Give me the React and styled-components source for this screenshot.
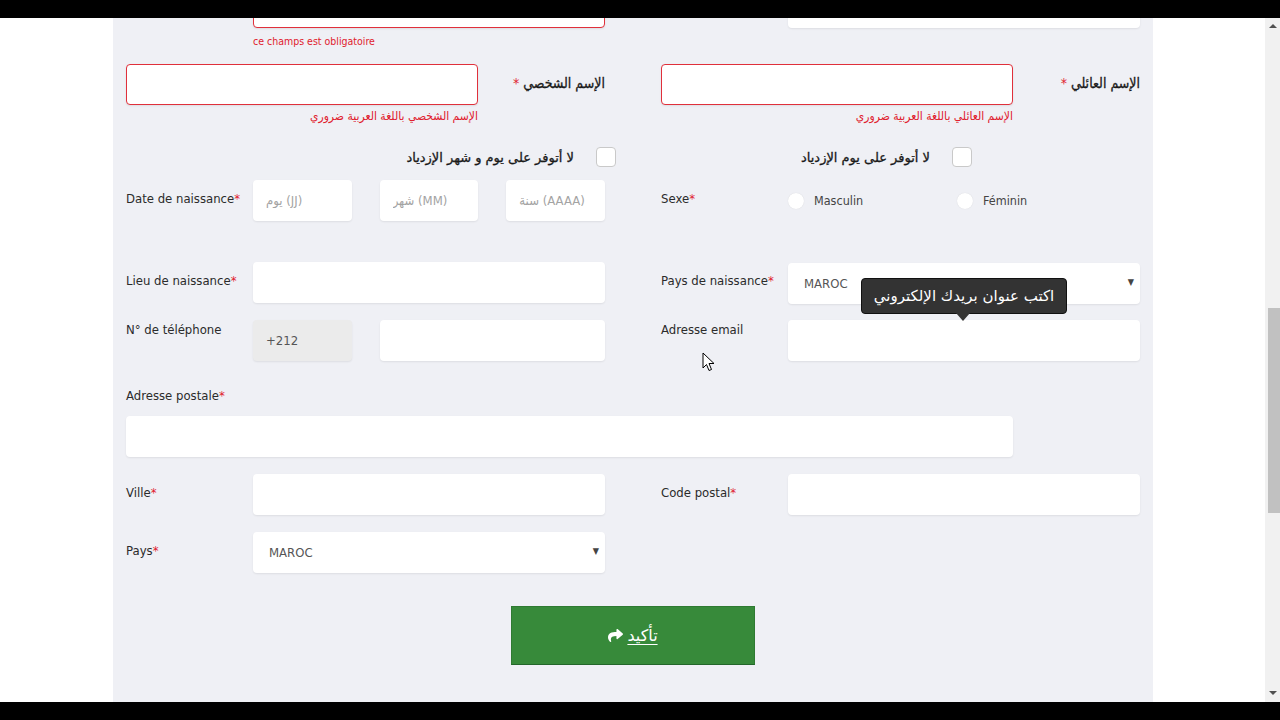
import React from 'react';
import styled, { createGlobalStyle } from 'styled-components';
import { FaShare } from 'react-icons/fa';

const GlobalStyle = createGlobalStyle`
  html, body {
    margin: 0;
    padding: 0;
    overflow: hidden;
    background: #000;
  }
  * { box-sizing: border-box; }
`;

const FONT = `"DejaVu Sans Condensed", "DejaVu Sans", "Liberation Sans", sans-serif`;

const Frame = styled.div`
  width: 1280px;
  height: 720px;
  display: flex;
  flex-direction: column;
  background: #000;
  font-family: ${FONT};
`;

const BlackBar = styled.div`
  height: 18px;
  flex: 0 0 18px;
  background: #000;
`;

const Main = styled.div`
  flex: 1;
  display: flex;
  background: #fff;
  overflow: hidden;
`;

const Gutter = styled.div`
  flex: 0 0 ${(p) => p.$w}px;
  background: #fff;
`;

const Panel = styled.div`
  flex: 0 0 1040px;
  background: #eff0f5;
  padding: 0 13px;
  overflow: hidden;
  position: relative;
`;

const Content = styled.div`
  margin-top: -31px;
`;

const Scrollbar = styled.div`
  flex: 0 0 15px;
  background: #f1f1f1;
  display: flex;
  flex-direction: column;
  align-items: center;
  justify-content: space-between;
  padding: 6px 0 7px;
  position: relative;
`;

const Thumb = styled.div`
  position: absolute;
  left: 3px;
  right: 0;
  top: 290px;
  height: 205px;
  background: #c1c1c1;
`;

const Arrow = styled.div`
  width: 0;
  height: 0;
  border-left: 4px solid transparent;
  border-right: 4px solid transparent;
  ${(p) => (p.$down ? 'border-top: 4px solid #505050;' : 'border-bottom: 4px solid #505050;')}
`;

const Row = styled.div`
  display: grid;
  grid-template-columns: 479px 479px;
  column-gap: 56px;
  margin-top: ${(p) => p.$mt || 0}px;
  align-items: start;
`;

const Field = styled.div`
  display: grid;
  grid-template-columns: ${(p) => (p.$rtl ? '352px 127px' : '127px 352px')};
  align-items: start;
  position: relative;
`;

const Label = styled.div`
  font-size: 13px;
  line-height: 20px;
  color: #2b2b2b;
  padding-top: ${(p) => (p.$pt === undefined ? 9 : p.$pt)}px;
  white-space: nowrap;
  ${(p) =>
    p.$rtl &&
    'text-align: right; direction: rtl; font-size: 14px; color: #1a1a1a; -webkit-text-stroke: 0.3px #1a1a1a; padding-top: 9px;'}
`;

const Star = styled.span`
  color: #e0202e;
  -webkit-text-stroke: 0;
`;

const Input = styled.input`
  display: block;
  width: 100%;
  height: 41px;
  border: 1px solid ${(p) => (p.$error ? '#e0303b' : 'transparent')};
  border-radius: 4px;
  background: ${(p) => (p.$muted ? '#ebebeb' : '#fff')};
  box-shadow: 0 1px 2px rgba(0, 0, 0, 0.08);
  padding: 0 12px;
  font-family: ${FONT};
  font-size: 13px;
  color: #555;
  outline: none;

  &::placeholder {
    color: #a3a3a3;
  }
`;

const ErrorText = styled.div`
  font-size: ${(p) => (p.$rtl ? 12 : 10.5)}px;
  line-height: 16px;
  color: #e0202e;
  margin-top: ${(p) => p.$mt || 3}px;
  text-align: ${(p) => (p.$rtl ? 'right' : 'left')};
  direction: ${(p) => (p.$rtl ? 'rtl' : 'ltr')};
`;

const Triple = styled.div`
  display: grid;
  grid-template-columns: 1fr 1fr 1fr;
  column-gap: 28px;
`;

const Phone = styled.div`
  display: grid;
  grid-template-columns: 99px 1fr;
  column-gap: 28px;
`;

const SelectBox = styled.div`
  height: 41px;
  border-radius: 4px;
  background: #fff;
  box-shadow: 0 1px 2px rgba(0, 0, 0, 0.08);
  display: flex;
  align-items: center;
  justify-content: space-between;
  padding: 0 6px 0 16px;
  font-size: 13px;
  color: #555;
  margin-top: ${(p) => p.$mt || 0}px;
`;

const Caret = styled.span`
  font-size: 9px;
  color: #444;
  margin-top: -4px;
`;

const CheckRow = styled.div`
  display: grid;
  grid-template-columns: 479px 479px;
  column-gap: 56px;
  margin-top: 23px;
  height: 20px;
`;

const CheckItem = styled.label`
  display: flex;
  flex-direction: row-reverse;
  align-items: center;
  gap: 22px;
  margin-right: ${(p) => p.$inset}px;
  direction: ltr;
`;

const Box = styled.span`
  width: 20px;
  height: 20px;
  flex: 0 0 20px;
  border: 1px solid #c9c9c9;
  border-radius: 4px;
  background: #fff;
`;

const CheckText = styled.span`
  direction: rtl;
  font-size: 13px;
  color: #1a1a1a;
  -webkit-text-stroke: 0.3px #1a1a1a;
  font-family: "DejaVu Sans", sans-serif;
`;

const Radios = styled.div`
  display: grid;
  grid-template-columns: 169px 1fr;
  height: 41px;
  align-items: center;
`;

const Radio = styled.span`
  display: flex;
  align-items: center;
  gap: 10px;
  font-size: 12.5px;
  color: #444;
`;

const Circle = styled.span`
  width: 16px;
  height: 16px;
  border-radius: 50%;
  background: #fff;
  box-shadow: 0 0 1px rgba(0, 0, 0, 0.15);
`;

const Wide = styled.div`
  width: 887px;
  margin-top: 10px;
`;

const ButtonRow = styled.div`
  display: flex;
  justify-content: center;
  margin-top: 33px;
`;

const Submit = styled.button`
  width: 244px;
  height: 59px;
  background: #378a3a;
  border: 1px solid #2f7a32;
  border-bottom-color: #23662a;
  border-radius: 0;
  color: #fff;
  display: flex;
  align-items: center;
  justify-content: center;
  gap: 4px;
  font-family: "DejaVu Sans", sans-serif;
  font-size: 16px;
  cursor: pointer;

  span {
    text-decoration: underline;
    text-underline-offset: 3px;
  }
`;

const Tooltip = styled.div`
  position: absolute;
  left: 73px;
  top: -42px;
  width: 206px;
  height: 36px;
  background: #333;
  border: 1px solid #111;
  border-radius: 4px;
  color: #fff;
  font-family: "DejaVu Sans", sans-serif;
  font-size: 15px;
  display: flex;
  align-items: center;
  justify-content: center;
  direction: rtl;
  z-index: 2;

  &::after {
    content: '';
    position: absolute;
    left: 94px;
    bottom: -8px;
    border-left: 7px solid transparent;
    border-right: 7px solid transparent;
    border-top: 8px solid #333;
  }
`;

const Pointer = styled.svg`
  position: absolute;
  left: 41px;
  top: 32px;
  z-index: 3;
`;

const LtrField = ({ label, children, pt }) => (
  <Field>
    <Label $pt={pt}>{label}</Label>
    <div>{children}</div>
  </Field>
);

const req = (text) => (
  <>
    {text}
    <Star>*</Star>
  </>
);

export default function App() {
  return (
    <Frame>
      <GlobalStyle />
      <BlackBar />
      <Main>
        <Gutter $w={113} />
        <Panel>
          <Content>
            <Row>
              <LtrField label="">
                <Input $error />
                <ErrorText $mt={5}>ce champs est obligatoire</ErrorText>
              </LtrField>
              <LtrField label="">
                <Input />
              </LtrField>
            </Row>

            <Row $mt={15}>
              <Field $rtl>
                <div>
                  <Input $error dir="rtl" />
                  <ErrorText $rtl>الإسم الشخصي باللغة العربية ضروري</ErrorText>
                </div>
                <Label $rtl>
                  الإسم الشخصي <Star>*</Star>
                </Label>
              </Field>
              <Field $rtl>
                <div>
                  <Input $error dir="rtl" />
                  <ErrorText $rtl>الإسم العائلي باللغة العربية ضروري</ErrorText>
                </div>
                <Label $rtl>
                  الإسم العائلي <Star>*</Star>
                </Label>
              </Field>
            </Row>

            <CheckRow>
              <CheckItem $inset={-11}>
                <Box />
                <CheckText>لا أتوفر على يوم و شهر الإزدياد</CheckText>
              </CheckItem>
              <CheckItem $inset={168}>
                <Box />
                <CheckText>لا أتوفر على يوم الإزدياد</CheckText>
              </CheckItem>
            </CheckRow>

            <Row $mt={13}>
              <LtrField label={req('Date de naissance')}>
                <Triple>
                  <Input placeholder="يوم (JJ)" />
                  <Input placeholder="شهر (MM)" />
                  <Input placeholder="سنة (AAAA)" />
                </Triple>
              </LtrField>
              <LtrField label={req('Sexe')}>
                <Radios>
                  <Radio>
                    <Circle />
                    Masculin
                  </Radio>
                  <Radio>
                    <Circle />
                    Féminin
                  </Radio>
                </Radios>
              </LtrField>
            </Row>

            <Row $mt={41}>
              <LtrField label={req('Lieu de naissance')}>
                <Input />
              </LtrField>
              <LtrField label={req('Pays de naissance')}>
                <SelectBox $mt={1}>
                  MAROC
                  <Caret>▼</Caret>
                </SelectBox>
              </LtrField>
            </Row>

            <Row $mt={16}>
              <LtrField label="N° de téléphone" pt={0}>
                <Phone>
                  <Input $muted defaultValue="+212" readOnly />
                  <Input />
                </Phone>
              </LtrField>
              <LtrField label="Adresse email" pt={0}>
                <div style={{ position: 'relative' }}>
                  <Input />
                  <Tooltip>اكتب عنوان بريدك الإلكتروني</Tooltip>
                </div>
                <Pointer width="13" height="21" viewBox="0 0 13 21">
                  <path
                    d="M1 1 L1 16 L4.5 12.5 L7 18.5 L9.5 17.5 L7 11.5 L12 11.5 Z"
                    fill="#fff"
                    stroke="#000"
                    strokeWidth="1"
                    strokeLinejoin="round"
                  />
                </Pointer>
              </LtrField>
            </Row>

            <div style={{ marginTop: 25 }}>
              <Label $pt={0}>{req('Adresse postale')}</Label>
              <Wide>
                <Input />
              </Wide>
            </div>

            <Row $mt={17}>
              <LtrField label={req('Ville')}>
                <Input />
              </LtrField>
              <LtrField label={req('Code postal')}>
                <Input />
              </LtrField>
            </Row>

            <Row $mt={17}>
              <LtrField label={req('Pays')}>
                <SelectBox>
                  MAROC
                  <Caret>▼</Caret>
                </SelectBox>
              </LtrField>
            </Row>

            <ButtonRow>
              <Submit type="button">
                <FaShare size={15} />
                <span>تأكيد</span>
              </Submit>
            </ButtonRow>
          </Content>
        </Panel>
        <Gutter $w={112} />
        <Scrollbar>
          <Arrow />
          <Thumb />
          <Arrow $down />
        </Scrollbar>
      </Main>
      <BlackBar />
    </Frame>
  );
}
